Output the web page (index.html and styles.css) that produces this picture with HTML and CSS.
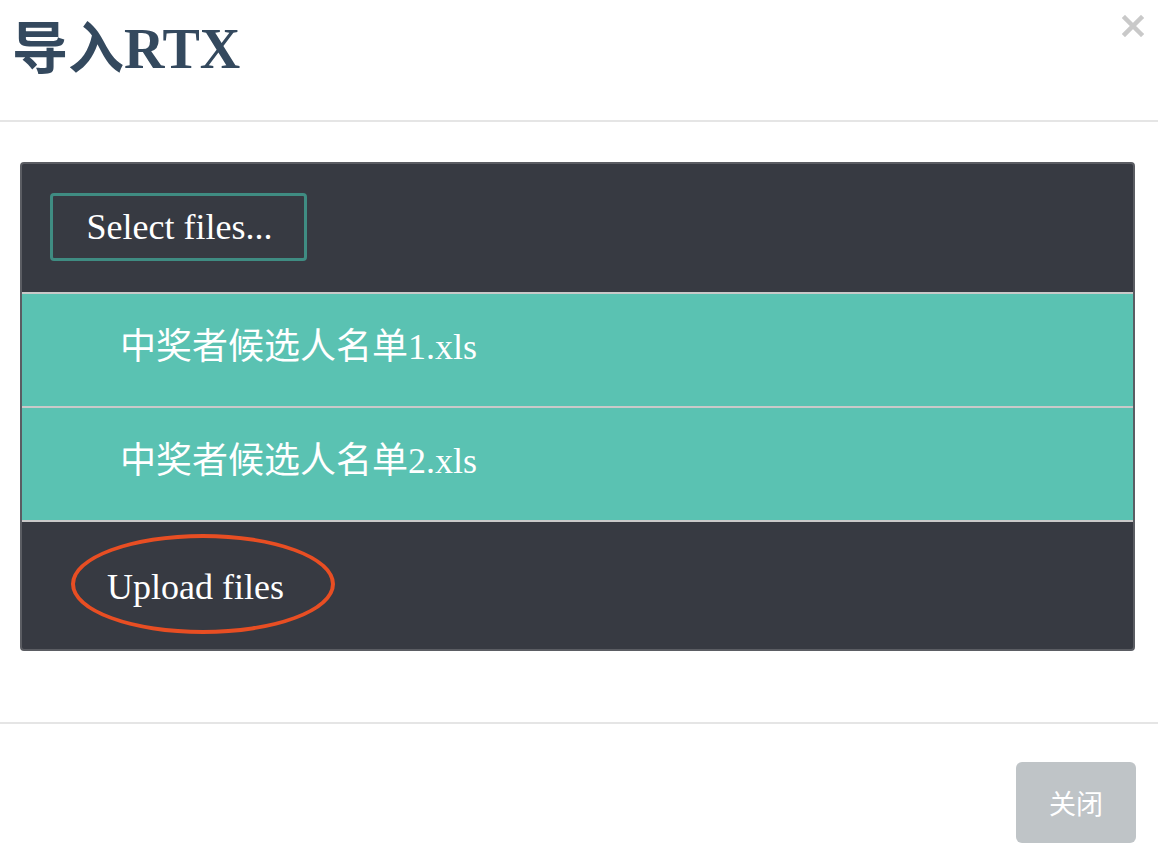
FILE: index.html
```html
<!DOCTYPE html>
<html lang="zh">
<head>
<meta charset="utf-8">
<title>导入RTX</title>
<link rel="stylesheet" href="styles.css">
</head>
<body>
<div class="modal">
  <div class="modal-header">
    <h1 class="modal-title">导入RTX</h1>
    <button class="close" aria-label="Close">
      <svg width="22" height="22" viewBox="0 0 22 22"><path d="M3 3 L19 19 M19 3 L3 19" stroke="#c9c9c9" stroke-width="4.5" stroke-linecap="square"/></svg>
    </button>
  </div>
  <div class="modal-body">
    <div class="uploader">
      <div class="select-area">
        <div class="select-btn">Select files...</div>
      </div>
      <div class="file-row">中奖者候选人名单1.xls</div>
      <div class="file-row">中奖者候选人名单2.xls</div>
      <div class="upload-area">
        <span class="upload-btn">Upload files<span class="ring"></span></span>
      </div>
    </div>
  </div>
  <div class="modal-footer">
    <button class="btn-close">关闭</button>
  </div>
</div>
</body>
</html>
```
FILE: styles.css
```css
html, body {
  margin: 0;
  padding: 0;
  background: #ffffff;
}
body {
  font-family: "Liberation Serif", "Noto Sans CJK SC", serif;
  width: 1158px;
  height: 860px;
  overflow: hidden;
}
.modal-header {
  height: 120px;
  border-bottom: 2px solid #e5e5e5;
  display: flex;
  justify-content: space-between;
  align-items: flex-start;
}
.modal-title {
  margin: 0;
  padding: 17px 0 0 12px;
  font-size: 56px;
  line-height: 64px;
  font-weight: bold;
  color: #34495e;
  font-family: "Liberation Serif", "Noto Sans CJK SC", serif;
}
.close {
  border: 0;
  background: transparent;
  padding: 0;
  margin: 15px 14px 0 0;
  width: 22px;
  height: 22px;
  display: block;
}
.close svg { display: block; }
.modal-body {
  padding: 40px 23px 71px 20px;
}
.uploader {
  background: #373a42;
  border: 2px solid #5b5d63;
  border-radius: 4px;
  overflow: hidden;
}
.select-area {
  height: 130px;
  display: flex;
  align-items: flex-start;
  padding: 29px 0 0 28px;
  box-sizing: border-box;
  border-bottom: 2px solid #c9c9c9;
}
.select-btn {
  width: 257px;
  height: 68px;
  box-sizing: border-box;
  border: 3px solid #3f8c82;
  border-radius: 4px;
  color: #ffffff;
  font-size: 36px;
  display: flex;
  align-items: center;
  justify-content: center;
  padding-left: 2px;
}
.file-row {
  height: 106px;
  background: #5ac2b2;
  border-bottom: 2px solid #c9c9c9;
  color: #ffffff;
  font-size: 36px;
  line-height: 36px;
  display: flex;
  align-items: center;
  padding: 0 0 6px 98px;
}
.upload-area {
  height: 127px;
  display: flex;
  align-items: center;
  padding-left: 85px;
}
.upload-btn {
  position: relative;
  color: #ffffff;
  font-size: 36px;
  line-height: 40px;
  margin-top: 2px;
}
.ring {
  position: absolute;
  left: -36px;
  top: -33px;
  width: 264px;
  height: 100px;
  box-sizing: border-box;
  border: 4px solid #e84e23;
  border-radius: 50%;
}
.modal-footer {
  border-top: 2px solid #e5e5e5;
  display: flex;
  justify-content: flex-end;
  padding: 38px 22px 0 0;
}
.btn-close {
  width: 120px;
  height: 81px;
  border: 0;
  border-radius: 6px;
  background: #bfc4c7;
  color: #ffffff;
  font-size: 27px;
  font-family: "Noto Sans CJK SC", sans-serif;
  padding: 0;
}
```
